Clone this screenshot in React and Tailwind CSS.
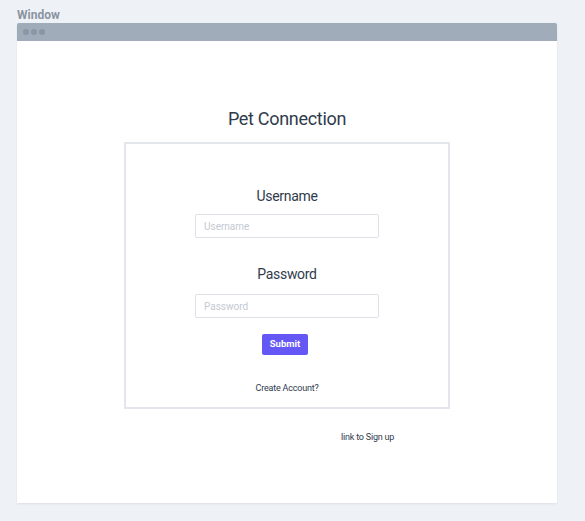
export default function App() {
  return (
    <div
      className="min-h-[521px] bg-[#eef1f6] pl-[17px] pt-[7px]"
      style={{ fontFamily: "Roboto, 'Liberation Sans', sans-serif" }}
    >
      <div className="text-[12px] leading-[16px] font-bold text-[#8a94a1]">
        Window
      </div>
      <div className="w-[540px] shadow-[0_1px_2px_rgba(0,0,0,0.08)]">
        {/* title bar */}
        <div className="h-[18px] bg-[#a0acb9] rounded-t-[2px] flex items-center gap-[2px] pl-[6px]">
          <span className="w-[6px] h-[6px] rounded-full bg-[#8a96a4]" />
          <span className="w-[6px] h-[6px] rounded-full bg-[#8a96a4]" />
          <span className="w-[6px] h-[6px] rounded-full bg-[#8a96a4]" />
        </div>

        {/* body */}
        <div className="h-[462px] bg-white flex flex-col items-center pt-[66px]">
          <h1 className="text-[18px] leading-[24px] text-[#2f3b4c] tracking-[-0.3px]">
            Pet Connection
          </h1>

          <div className="mt-[11px] w-[326px] h-[267px] border-2 border-[#e3e6ec] flex flex-col items-center pt-[42px]">
            <label className="text-[14px] leading-[20px] text-[#2f3b4c] tracking-[-0.3px]">
              Username
            </label>
            <input
              placeholder="Username"
              className="mt-[8px] w-[184px] h-[24px] border border-[#dde1e6] rounded-[2px] px-[8px] text-[10px] text-[#2f3b4c] placeholder:text-[#c3c9d2] outline-none"
            />

            <label className="mt-[26px] text-[14px] leading-[20px] text-[#2f3b4c] tracking-[-0.3px]">
              Password
            </label>
            <input
              type="password"
              placeholder="Password"
              className="mt-[10px] w-[184px] h-[24px] border border-[#dde1e6] rounded-[2px] px-[8px] text-[10px] text-[#2f3b4c] placeholder:text-[#c3c9d2] outline-none"
            />

            <button className="mt-[16px] mr-[4px] w-[46px] h-[21px] bg-[#6457f5] rounded-[2px] text-white text-[9.5px] font-bold">
              Submit
            </button>

            <div className="mt-[27px] text-[9px] leading-[12px] text-[#2f3b4c] tracking-[-0.2px]">
              Create Account?
            </div>
          </div>

          <div className="w-full pl-[324px] mt-[22px] text-[9px] leading-[12px] text-[#2f3b4c] tracking-[-0.2px]">
            link to Sign up
          </div>
        </div>
      </div>
    </div>
  );
}
